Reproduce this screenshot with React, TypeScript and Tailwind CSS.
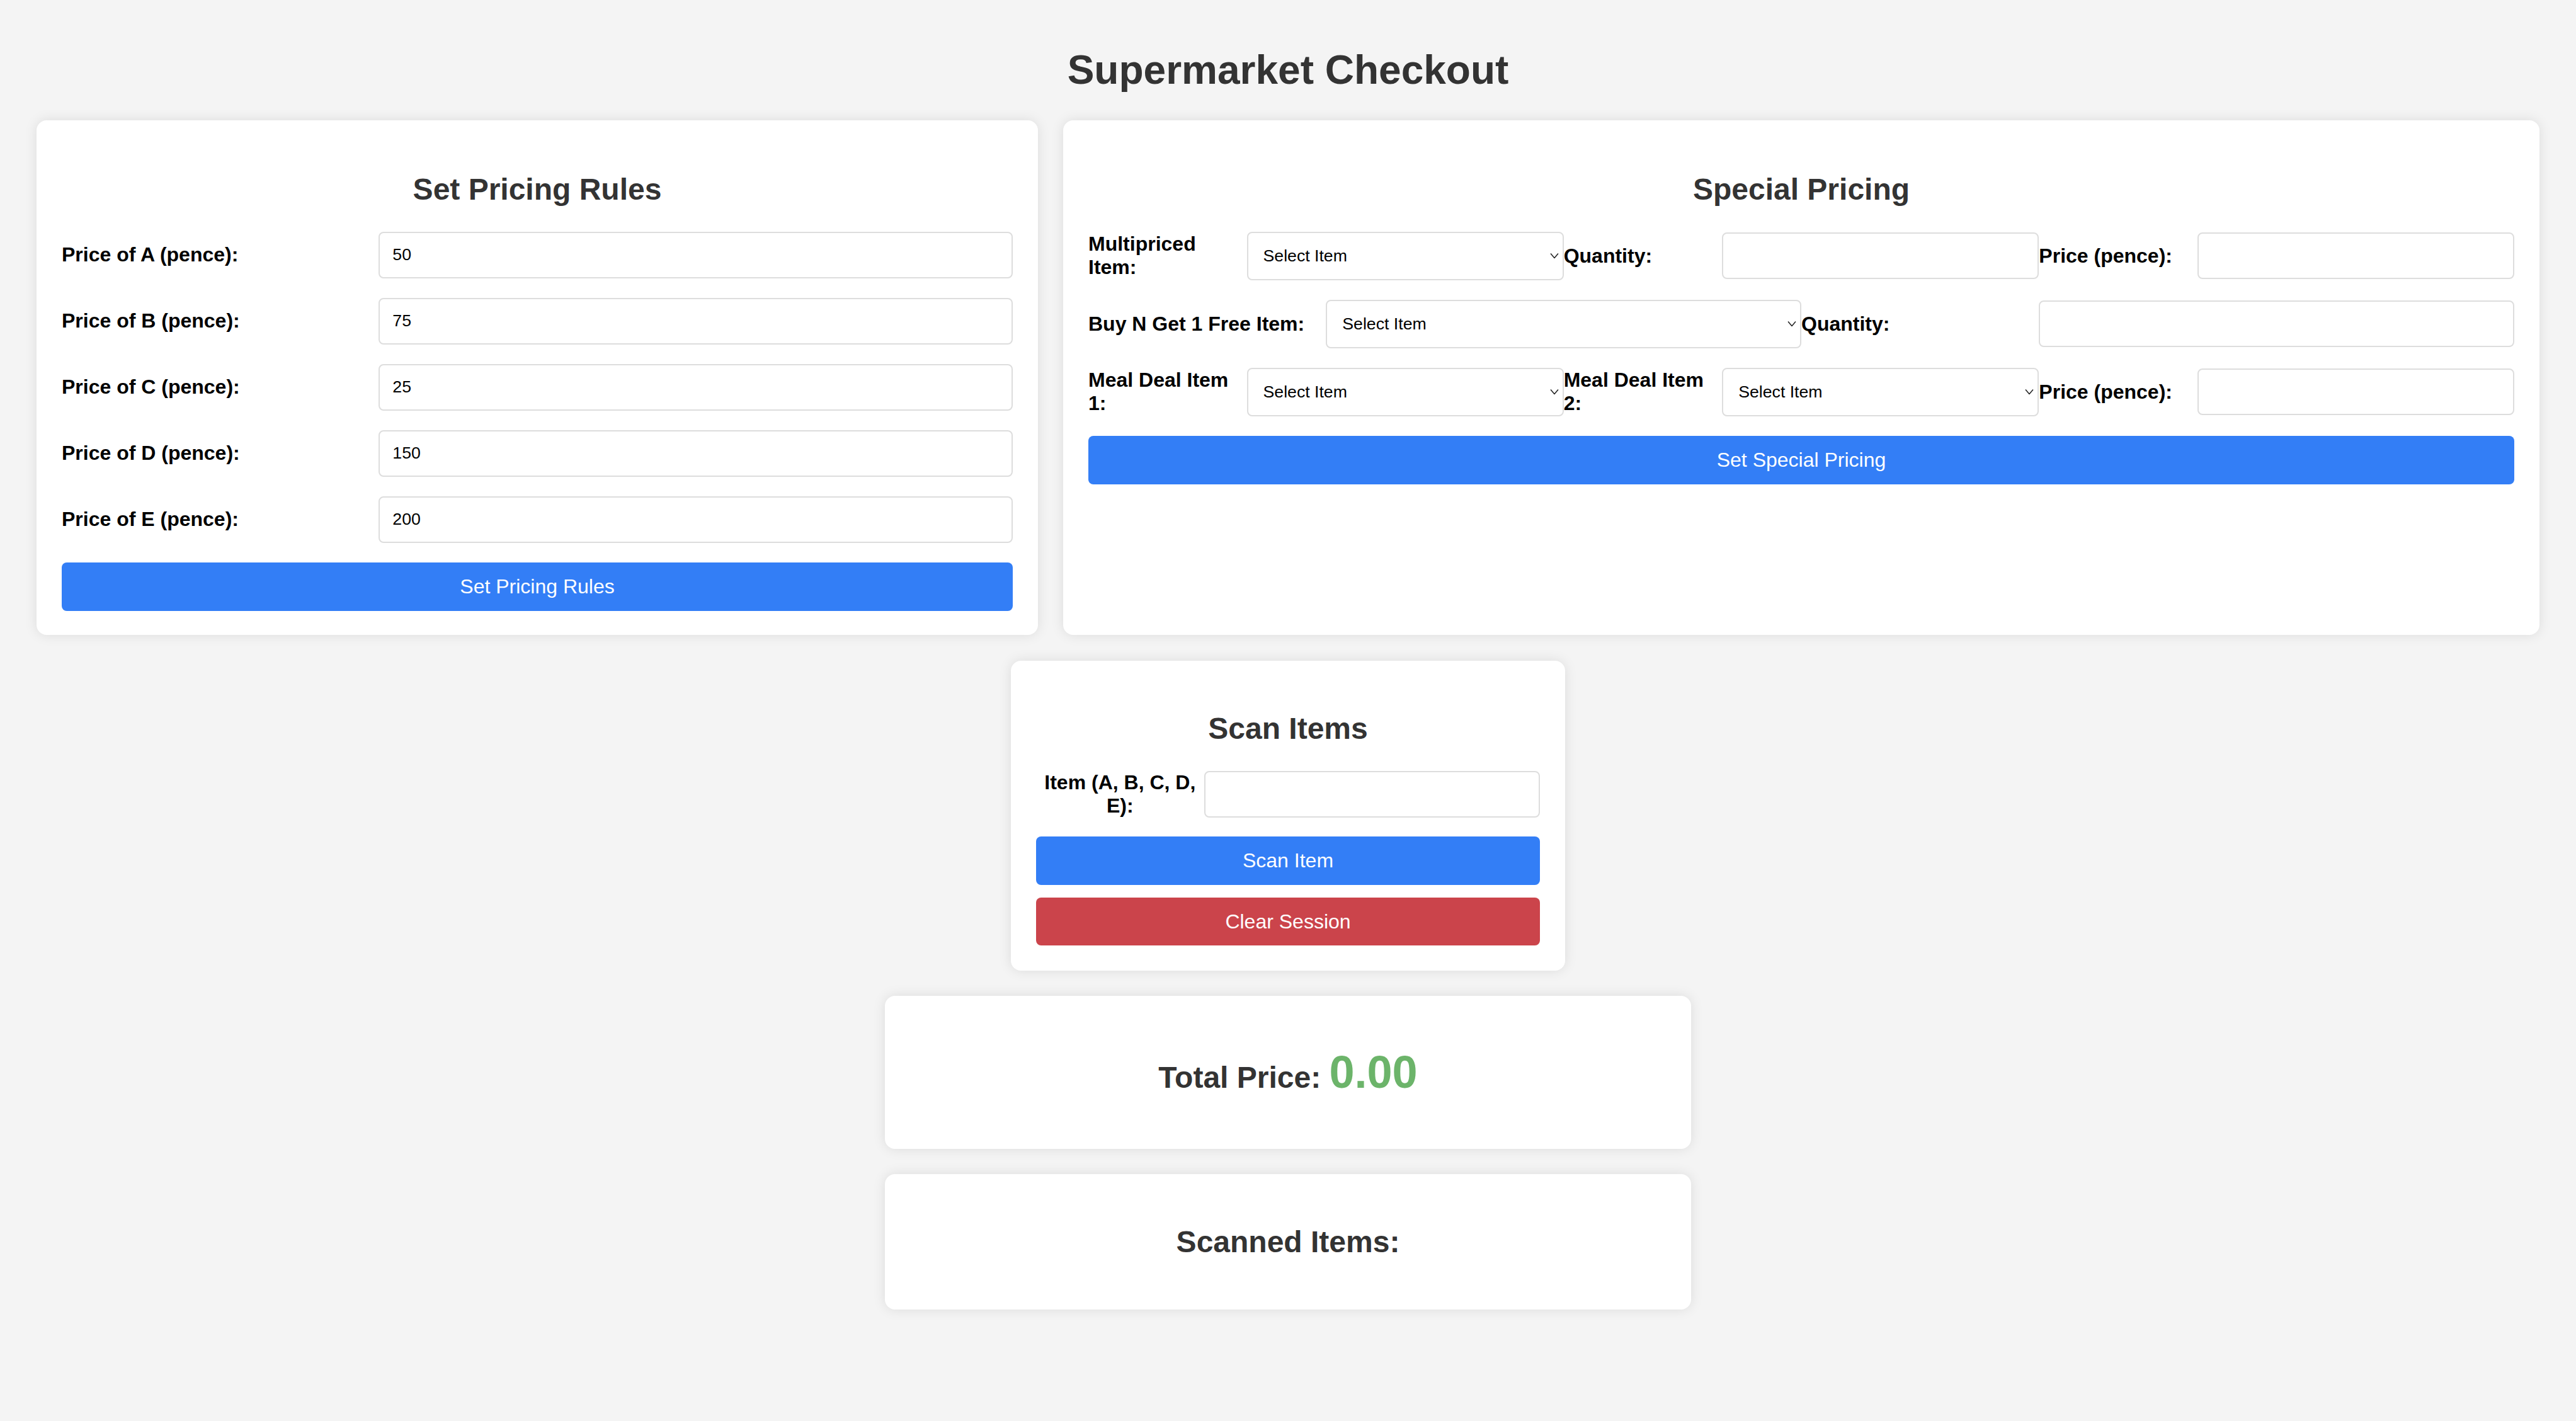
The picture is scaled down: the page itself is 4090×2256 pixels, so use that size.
import React from "react";

const labelCls = "min-w-0 text-[32px] font-bold leading-[1.15] text-black";
const inputCls =
  "w-full min-w-0 h-[74px] border-2 border-[#dddddd] rounded-[8px] bg-white px-[20px] text-[26.67px] text-black outline-none";
const h2Cls =
  "my-[40px] text-center text-[48px] font-bold leading-[1.15] text-[#333333]";
const cardCls =
  "bg-white rounded-[16px] p-[40px] shadow-[0_0_20px_rgba(0,0,0,0.1)]";
const btnBlue =
  "block w-full rounded-[8px] bg-[#337ef6] py-[20px] text-center text-[32px] leading-[1.15] text-white";

const row2 =
  "grid grid-cols-[minmax(0,1fr)_minmax(0,2fr)] items-center";
const row4 =
  "mb-[31px] grid h-[77px] grid-cols-[minmax(0,1fr)_minmax(0,2fr)_minmax(0,1fr)_minmax(0,2fr)] items-center";
const row6 =
  "mb-[31px] grid h-[77px] grid-cols-[minmax(0,1fr)_minmax(0,2fr)_minmax(0,1fr)_minmax(0,2fr)_minmax(0,1fr)_minmax(0,2fr)] items-center";

function Select() {
  return (
    <div className="relative h-[77px] min-w-0">
      <select className="h-full w-full appearance-none rounded-[8px] border-2 border-[#dddddd] bg-white pl-[24px] pr-[30px] text-[26.67px] text-black outline-none">
        <option>Select Item</option>
        <option>A</option>
        <option>B</option>
        <option>C</option>
        <option>D</option>
        <option>E</option>
      </select>
      <svg
        className="pointer-events-none absolute right-[8px] top-1/2 -translate-y-1/2"
        width="14"
        height="9"
        viewBox="0 0 14 9"
      >
        <polyline
          points="1,1 7,8 13,1"
          fill="none"
          stroke="#222222"
          strokeWidth="1.5"
        />
      </svg>
    </div>
  );
}

function PriceRow({ letter, value }: { letter: string; value: string }) {
  return (
    <div className={`mb-[31px] ${row2}`}>
      <label className={labelCls}>Price of {letter} (pence):</label>
      <input className={inputCls} defaultValue={value} />
    </div>
  );
}

export default function App() {
  return (
    <div className="min-h-[2256px] bg-[#f4f4f4] pb-[100px] font-['Liberation_Sans',Arial,sans-serif]">
      <h1 className="pt-[75px] mb-[42px] text-center text-[64px] font-bold leading-[1.15] text-[#333333]">
        Supermarket Checkout
      </h1>

      <div className="flex items-stretch gap-[40px] px-[58px]">
        <div className={`w-[1590px] shrink-0 ${cardCls} pt-[42px] pb-[38px]`}>
          <h2 className={h2Cls}>Set Pricing Rules</h2>
          <PriceRow letter="A" value="50" />
          <PriceRow letter="B" value="75" />
          <PriceRow letter="C" value="25" />
          <PriceRow letter="D" value="150" />
          <PriceRow letter="E" value="200" />
          <button className={btnBlue}>Set Pricing Rules</button>
        </div>

        <div className={`flex-1 min-w-0 ${cardCls} pt-[42px] pb-[38px]`}>
          <h2 className={h2Cls}>Special Pricing</h2>
          <div className={row6}>
            <label className={labelCls}>Multipriced Item:</label>
            <Select />
            <label className={labelCls}>Quantity:</label>
            <input className={inputCls} />
            <label className={labelCls}>Price (pence):</label>
            <input className={inputCls} />
          </div>
          <div className={row4}>
            <label className={labelCls}>Buy N Get 1 Free Item:</label>
            <Select />
            <label className={labelCls}>Quantity:</label>
            <input className={inputCls} />
          </div>
          <div className={row6}>
            <label className={labelCls}>Meal Deal Item 1:</label>
            <Select />
            <label className={labelCls}>Meal Deal Item 2:</label>
            <Select />
            <label className={labelCls}>Price (pence):</label>
            <input className={inputCls} />
          </div>
          <button className={btnBlue}>Set Special Pricing</button>
        </div>
      </div>

      <div className="mt-[41px] flex flex-col items-center gap-[40px]">
        <div className={`w-[880px] text-center ${cardCls}`}>
          <h2 className={h2Cls}>Scan Items</h2>
          <div className={`mb-[30px] ${row2}`}>
            <label className={`${labelCls} text-center`}>
              Item (A, B, C, D, E):
            </label>
            <input className={inputCls} />
          </div>
          <button className={btnBlue}>Scan Item</button>
          <button className="mt-[20px] block w-full rounded-[8px] bg-[#cb444b] py-[20px] text-center text-[32px] leading-[1.15] text-white">
            Clear Session
          </button>
        </div>

        <div className={`w-[1280px] ${cardCls}`}>
          <h2 className={h2Cls}>
            Total Price:{" "}
            <span className="text-[72px] text-[#6cb46a]">0.00</span>
          </h2>
        </div>

        <div className={`w-[1280px] ${cardCls}`}>
          <h2 className={h2Cls}>Scanned Items:</h2>
        </div>
      </div>
    </div>
  );
}
